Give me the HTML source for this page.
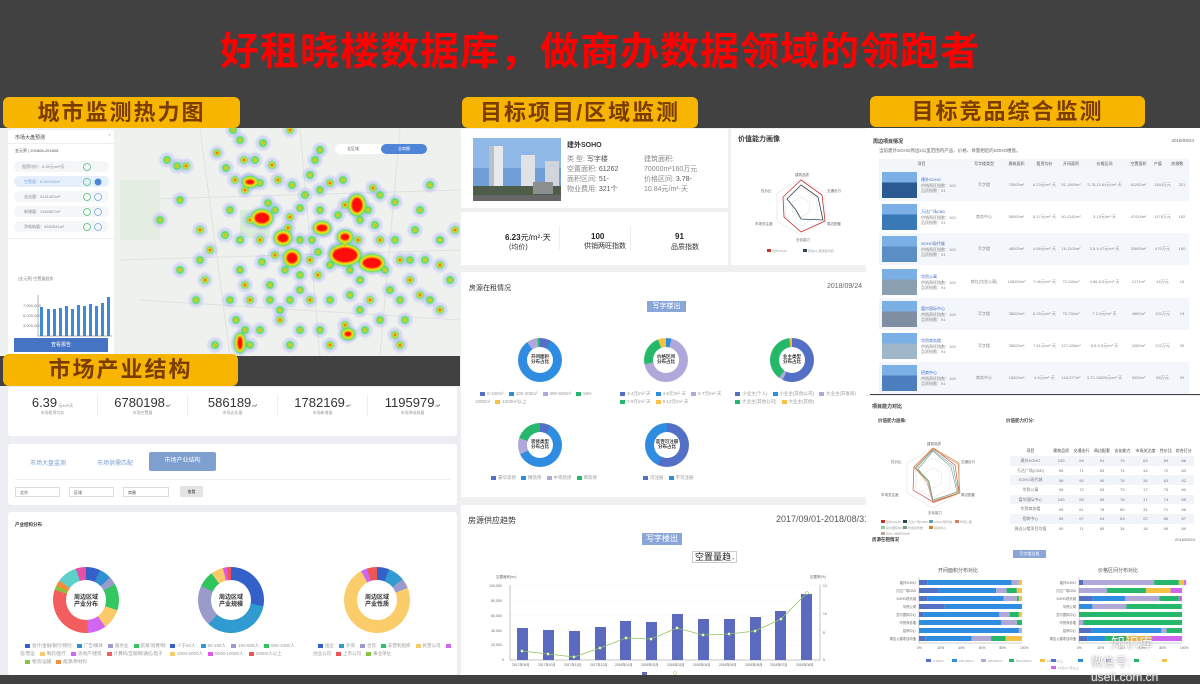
<!DOCTYPE html>
<html><head><meta charset="utf-8">
<style>
*{margin:0;padding:0;box-sizing:border-box}
body{width:1200px;height:675px;overflow:hidden;background:#414141;font-family:"Liberation Sans","Noto Sans CJK SC",sans-serif;position:relative;color:#333}
.a{position:absolute}
.pill{position:absolute;background:#f7b500;border-radius:6px;color:#7a3c00;font-weight:bold;font-size:22px;text-align:center;line-height:31px;letter-spacing:2px}
.card{position:absolute;background:#fff}
.t{position:absolute;font-size:5px;color:#888;white-space:nowrap}
.dn{position:absolute;border-radius:50%}
.dn::after{content:"";position:absolute;left:50%;top:50%;width:60%;height:60%;margin:-30% 0 0 -30%;background:#fff;border-radius:50%}
.dl{position:absolute;font-size:6px;font-weight:bold;color:#333;text-align:center;line-height:7px;z-index:2;white-space:nowrap}
.lg{position:absolute;font-size:4.5px;color:#999;white-space:nowrap;line-height:8px}
.lg i{display:inline-block;width:5px;height:4px;margin:0 2px 0 5px;vertical-align:middle}
table{border-collapse:collapse}
</style></head><body>

<div class="a" style="left:0;top:21px;width:1200px;text-align:center;font-size:39px;color:#f00;font-weight:bold;letter-spacing:1px">好租晓楼数据库，做商办数据领域的领跑者</div>

<!-- LEFT TOP MAP -->
<div class="a" style="left:0;top:128px;width:460px;height:228px;background:#eef1ee;overflow:hidden">
<svg class="a" style="left:0;top:0" width="460" height="228" viewBox="0 128 460 228">
<defs><filter id="b"><feGaussianBlur stdDeviation="0.9"/></filter></defs>
<g stroke="#dfe3df" stroke-width="1" fill="none"><path d="M120 200 L460 190 M140 300 L460 320 M200 128 L230 356 M400 128 L380 356 M120 260 L460 250 M300 128 L320 356"/></g>
<rect x="240" y="210" width="30" height="28" fill="#d8ecd8"/><rect x="120" y="180" width="40" height="60" fill="#e3eee3"/>
<g id="heat" filter="url(#b)"></g>
</svg>
<div class="a" style="left:335px;top:16px;width:92px;height:10px;background:#fff;border-radius:5px;font-size:4px;color:#666;line-height:10px"><span style="margin-left:12px">全区域</span><span style="position:absolute;right:0;width:46px;height:10px;background:#4f85d8;color:#fff;border-radius:5px;text-align:center">全商圈</span></div>
</div>
<div class="a" style="left:8px;top:130px;width:107px;height:226px;background:#fff;border-right:1px solid #eee">
<div class="t" style="left:7px;top:4px;color:#444">市场大盘预测</div>
<div class="t" style="left:100px;top:3px;color:#bbb">×</div>
<div class="a" style="left:0;top:13px;width:107px;border-top:1px solid #eee"></div>
<div class="t" style="left:7px;top:18px;font-size:4px;color:#555">金元界 | 201808-201808</div>
<div class="a" style="left:6px;top:31px;width:95px;height:11px;border-radius:6px;background:#f5f6f8"><span class="t" style="left:8px;top:3px;font-size:4px">租赁均价：6.39元/m²/天</span></div>
<div class="a" style="left:6px;top:46px;width:95px;height:11px;border-radius:6px;background:#e6f0fc"><span class="t" style="left:10px;top:3px;font-size:4px;color:#7aa8e0">空置量：6780198m²</span></div>
<div class="a" style="left:6px;top:61px;width:95px;height:11px;border-radius:6px;background:#f5f6f8"><span class="t" style="left:10px;top:3px;font-size:4px">去化量：9141420m²</span></div>
<div class="a" style="left:6px;top:76px;width:95px;height:11px;border-radius:6px;background:#f5f6f8"><span class="t" style="left:10px;top:3px;font-size:4px">新增量：1340507m²</span></div>
<div class="a" style="left:6px;top:91px;width:95px;height:11px;border-radius:6px;background:#f5f6f8"><span class="t" style="left:10px;top:3px;font-size:4px">净吸纳量：4352541m²</span></div>
<svg class="a" style="left:75px;top:32px" width="30" height="72"><g fill="none" stroke="#52c07a" stroke-width=".8"><circle cx="4" cy="5" r="3.5"/><circle cx="4" cy="20" r="3.5"/><circle cx="4" cy="35" r="3.5"/><circle cx="4" cy="50" r="3.5"/><circle cx="4" cy="65" r="3.5"/></g><circle cx="15" cy="20" r="3.5" fill="#4f85d8"/><g fill="none" stroke="#7aa8e0" stroke-width=".8"><circle cx="15" cy="35" r="3.5"/><circle cx="15" cy="50" r="3.5"/><circle cx="15" cy="65" r="3.5"/></g></svg>
<div class="a" style="left:0;top:108px;width:107px;border-top:1px solid #eee"></div>
<div class="t" style="left:10px;top:146px;font-size:4px">[金元界] 空置量趋势</div>
<svg class="a" style="left:10px;top:135px" width="95" height="85">
<g fill="#3d8ad8"><rect x="22" y="42" width="3" height="29"/><rect x="29" y="44" width="3" height="27"/><rect x="35" y="44" width="3" height="27"/><rect x="41" y="43" width="3" height="28"/><rect x="47" y="41" width="3" height="30"/><rect x="53" y="44" width="3" height="27"/><rect x="59" y="40" width="3" height="31"/><rect x="65" y="41" width="3" height="30"/><rect x="71" y="39" width="3" height="32"/><rect x="77" y="41" width="3" height="30"/><rect x="83" y="38" width="3" height="33"/><rect x="89" y="32" width="3" height="39"/></g>
<line x1="20" y1="71" x2="94" y2="71" stroke="#666" stroke-width=".5"/><line x1="20" y1="30" x2="20" y2="71" stroke="#666" stroke-width=".5"/>
<g font-size="4" fill="#777"><text x="5" y="42">7,000,000</text><text x="5" y="52">5,000,000</text><text x="5" y="62">3,000,000</text></g>
</svg>
<div class="a" style="left:6px;top:208px;width:94px;height:14px;background:#4574c4;color:#fff;font-size:5px;text-align:center;line-height:14px">查看报告</div>
</div>

<!-- LEFT BOTTOM -->
<div class="a" style="left:0;top:386px;width:460px;height:289px;background:#eceef1"></div>
<div class="card" style="left:8px;top:387px;width:449px;height:49px;border-radius:3px">
<div class="a" style="left:0;top:8px;width:449px;display:flex;font-size:13px;color:#333">
<div style="flex:1;text-align:center">6.39<small style="font-size:4px;color:#888"> 元/m²/天</small><div style="font-size:4px;color:#999">市场租赁均价</div></div>
<div style="flex:1;text-align:center;border-left:1px solid #eee">6780198<small style="font-size:4px"> m²</small><div style="font-size:4px;color:#999">市场空置量</div></div>
<div style="flex:1;text-align:center;border-left:1px solid #eee">586189<small style="font-size:4px"> m²</small><div style="font-size:4px;color:#999">市场去化量</div></div>
<div style="flex:1;text-align:center;border-left:1px solid #eee">1782169<small style="font-size:4px"> m²</small><div style="font-size:4px;color:#999">市场新增量</div></div>
<div style="flex:1;text-align:center;border-left:1px solid #eee">1195979<small style="font-size:4px"> m²</small><div style="font-size:4px;color:#999">市场净吸纳量</div></div>
</div></div>
<div class="card" style="left:8px;top:444px;width:449px;height:61px;border-radius:3px">
<div class="t" style="left:22px;top:14px;font-size:6px;color:#7aa0cf">市场大盘监测</div>
<div class="t" style="left:89px;top:14px;font-size:6px;color:#7aa0cf">市场供需匹配</div>
<div class="a" style="left:141px;top:8px;width:67px;height:19px;background:#7f9fd0;border-radius:2px;color:#fff;font-size:6px;text-align:center;line-height:19px">市场产业结构</div>
<div class="a" style="left:7px;top:35px;width:435px;border-top:1px solid #eee"></div>
<div class="a" style="left:7px;top:43px;width:45px;height:10px;border:1px solid #ddd;font-size:4px;padding:2px 4px;color:#555">北京</div>
<div class="a" style="left:61px;top:43px;width:45px;height:10px;border:1px solid #ddd;font-size:4px;padding:2px 4px;color:#555">区域</div>
<div class="a" style="left:115px;top:43px;width:46px;height:10px;border:1px solid #ddd;font-size:4px;padding:2px 4px;color:#555">商圈</div>
<div class="a" style="left:172px;top:42px;width:23px;height:11px;background:#e4e4e4;font-size:4px;text-align:center;line-height:11px">查看</div>
</div>
<div class="card" style="left:8px;top:512px;width:449px;height:163px;border-radius:3px">
<div class="t" style="left:7px;top:10px;font-size:4.5px;color:#333;font-weight:bold">产业结构分布</div>
<div class="dn" style="left:45px;top:55px;width:66px;height:66px;background:conic-gradient(#3461c9 0 7%,#2f8fd0 7% 13%,#9b9bcc 13% 17%,#34c661 17% 30%,#fbc96a 30% 40%,#d266f0 40% 49%,#f35d5d 49% 80%,#87c43e 80% 82%,#f58e3a 82% 85%,#5fcfc9 85% 95%,#e94ea5 95% 100%)"></div>
<div class="dl" style="left:45px;top:83px;width:66px">周边区域<br>产业分布</div>
<div class="dn" style="left:190px;top:55px;width:66px;height:66px;background:conic-gradient(#3461c9 0 28%,#2f9bd0 28% 62%,#9a9acb 62% 82%,#2fc45e 82% 90%,#fbc96a 90% 96%,#e059e0 96% 98%,#f05555 98% 100%)"></div>
<div class="dl" style="left:190px;top:83px;width:66px">周边区域<br>产业规模</div>
<div class="dn" style="left:336px;top:55px;width:66px;height:66px;background:conic-gradient(#3461c9 0 6%,#2f9bd0 6% 14%,#9a9acb 14% 19%,#fbcd6a 19% 92%,#d066f0 92% 95%,#f05555 95% 100%)"></div>
<div class="dl" style="left:336px;top:83px;width:66px">周边区域<br>产业性质</div>
<div class="lg" style="left:12px;top:130px;width:150px;white-space:normal"><i style="background:#3461c9"></i>会计/金融/银行/保险<i style="background:#2f8fd0"></i>广告/媒体<i style="background:#9b9bcc"></i>服务业<i style="background:#34c661"></i>贸易/消费/制造/营运<i style="background:#fbc96a"></i>制药/医疗<i style="background:#d266f0"></i>房地产/建筑<i style="background:#f35d5d"></i>计算机/互联网/通信/电子<i style="background:#87c43e"></i>物流/运输<i style="background:#f58e3a"></i>能源/原材料</div>
<div class="lg" style="left:157px;top:130px;width:140px;white-space:normal"><i style="background:#3461c9"></i>少于50人<i style="background:#2f9bd0"></i>50-150人<i style="background:#9a9acb"></i>150-500人<i style="background:#2fc45e"></i>500-1000人<i style="background:#fbc96a"></i>1000-5000人<i style="background:#e059e0"></i>5000-10000人<i style="background:#f05555"></i>10000人以上</div>
<div class="lg" style="left:305px;top:130px;width:140px;white-space:normal"><i style="background:#3461c9"></i>国企<i style="background:#2f9bd0"></i>外资<i style="background:#9a9acb"></i>合资<i style="background:#2fc45e"></i>非营利组织<i style="background:#fbc96a"></i>民营公司<i style="background:#d066f0"></i>创业公司<i style="background:#f05555"></i>上市公司<i style="background:#87c43e"></i>事业单位</div>
</div>

<!-- MIDDLE -->
<div class="a" style="left:460px;top:128px;width:410px;height:547px;background:#f0f0f0"></div>
<div class="card" style="left:461px;top:129px;width:267px;height:79px">
<svg class="a" style="left:12px;top:9px" width="88" height="63"><rect width="88" height="63" fill="#6f9fd6"/><rect y="0" width="88" height="30" fill="#8fb8e6"/><rect x="16" y="8" width="14" height="45" fill="#e6e9ee"/><rect x="16" y="8" width="5" height="45" fill="#b9c0ca"/><rect x="48" y="17" width="14" height="36" fill="#dfe3e8"/><rect x="72" y="23" width="14" height="30" fill="#d0d5dc"/><rect x="0" y="48" width="88" height="15" fill="#4d5d4a"/><rect x="60" y="44" width="20" height="12" fill="#8b8f90"/><rect x="0" y="57" width="88" height="6" fill="#666"/></svg>
<div class="a" style="left:106px;top:11px;font-size:7px;font-weight:bold;color:#333">建外SOHO</div>
<div class="a" style="left:106px;top:26px;font-size:7px;color:#888;line-height:10px;width:160px">类 型: <span style="color:#555">写字楼</span><br>空置面积: <span style="color:#555">61262</span><br>面积区间: <span style="color:#555">51-</span><br>物业费用: <span style="color:#555">321个</span></div>
<div class="a" style="left:183px;top:26px;font-size:7px;color:#888;line-height:10px;width:90px">建筑面积:<br>70000m²160万元<br>价格区间: <span style="color:#555">3.78-</span><br>10.84元/m²·天</div>
</div>
<div class="card" style="left:461px;top:212px;width:267px;height:53px">
<div class="a" style="left:44px;top:20px;font-size:8px;font-weight:bold;color:#222">6.23<span style="font-weight:normal">元/m²·天</span></div>
<div class="a" style="left:48px;top:30px;font-size:7px;color:#333">(均价)</div>
<div class="a" style="left:98px;top:14px;height:24px;border-left:1px solid #eee"></div>
<div class="a" style="left:130px;top:20px;font-size:8px;font-weight:bold;color:#222">100</div>
<div class="a" style="left:123px;top:30px;font-size:7px;color:#333;width:42px;text-align:center;line-height:10px">供销两旺指数</div>
<div class="a" style="left:169px;top:14px;height:24px;border-left:1px solid #eee"></div>
<div class="a" style="left:214px;top:20px;font-size:8px;font-weight:bold;color:#222">91</div>
<div class="a" style="left:210px;top:30px;font-size:7px;color:#333">品质指数</div>
</div>
<div class="card" style="left:731px;top:129px;width:135px;height:136px">
<div class="a" style="left:7px;top:5px;font-size:7px;font-weight:bold;color:#333">价值能力画像</div>
<svg class="a" style="left:20px;top:28px" width="100" height="100" viewBox="-50 -50 100 100">
<g fill="none" stroke="#ddd" stroke-width=".5"><polygon points="0,-28 24,-14 24,14 0,28 -24,14 -24,-14"/><polygon points="0,-19 16,-9.5 16,9.5 0,19 -16,9.5 -16,-9.5"/><polygon points="0,-10 8.7,-5 8.7,5 0,10 -8.7,5 -8.7,-5"/></g>
<polygon points="0,-27 21,-12 24,14 0,25 -17,10 -18,-10" fill="none" stroke="#c23531" stroke-width=".8"/>
<polygon points="0,-22 17,-10 22,13 0,12 -5,3 -14,-8" fill="none" stroke="#2f4554" stroke-width=".8"/>
<g font-size="3.5" fill="#666"><text x="-6" y="-31">建筑品质</text><text x="26" y="-15">交通出行</text><text x="26" y="18">周边配套</text><text x="-5" y="34">去化能力</text><text x="-46" y="18">市场关注度</text><text x="-40" y="-15">性价比</text></g>
<rect x="-34" y="42" width="4" height="3" fill="#c23531"/><text x="-29" y="45" font-size="3" fill="#999">建外SOHO</text><rect x="2" y="42" width="4" height="3" fill="#2f4554"/><text x="7" y="45" font-size="3" fill="#999">周边2公里项目均值</text>
</svg>
</div>

<div class="card" style="left:461px;top:272px;width:405px;height:225px">
<div class="a" style="left:8px;top:11px;font-size:7px;color:#333">房源在租情况</div>
<div class="a" style="right:4px;top:11px;font-size:7px;color:#666">2018/09/24</div>
<div class="a" style="left:186px;top:29px;width:39px;height:11px;background:#8aa6d8;color:#fff;font-size:7px;text-align:center;line-height:11px">写字楼出</div>
</div>
<div class="dn" style="left:518px;top:338px;width:44px;height:44px;background:conic-gradient(#5470c6 0 8%,#2e8de0 8% 90%,#b0a8d9 90% 98%,#26b86a 98% 100%)"></div>
<div class="dl" style="left:518px;top:354px;width:44px;font-size:4.5px;line-height:5px">开间面积<br>分布占比</div>
<div class="dn" style="left:644px;top:338px;width:44px;height:44px;background:conic-gradient(#2e8de0 0 4%,#b0a8d9 4% 72%,#26b86a 72% 94%,#f6c244 94% 100%)"></div>
<div class="dl" style="left:644px;top:354px;width:44px;font-size:4.5px;line-height:5px">价格区间<br>分布占比</div>
<div class="dn" style="left:770px;top:338px;width:44px;height:44px;background:conic-gradient(#5470c6 0 57%,#b0a8d9 57% 60%,#26b86a 60% 98%,#f6c244 98% 100%)"></div>
<div class="dl" style="left:770px;top:354px;width:44px;font-size:4.5px;line-height:5px">业主类型<br>分布占比</div>
<div class="lg" style="left:475px;top:390px;width:130px;white-space:normal"><i style="background:#5470c6"></i>0-100m²<i style="background:#2e8de0"></i>100-300m²<i style="background:#b0a8d9"></i>300-500m²<i style="background:#26b86a"></i>500-1000m²<i style="background:#f6c244"></i>1000m²以上</div>
<div class="lg" style="left:615px;top:390px;width:110px;white-space:normal"><i style="background:#5470c6"></i>3-4元/m²·天<i style="background:#2e8de0"></i>4-5元/m²·天<i style="background:#b0a8d9"></i>5-7元/m²·天<i style="background:#26b86a"></i>7-9元/m²·天<i style="background:#f6c244"></i>9-12元/m²·天</div>
<div class="lg" style="left:730px;top:390px;width:135px;white-space:normal"><i style="background:#5470c6"></i>小业主(个人)<i style="background:#2e8de0"></i>小业主(其他公司)<i style="background:#b0a8d9"></i>大业主(开发商)<i style="background:#26b86a"></i>大业主(其他公司)<i style="background:#f6c244"></i>大业主(其他)</div>
<div class="dn" style="left:518px;top:423px;width:44px;height:44px;background:conic-gradient(#5470c6 0 8%,#2e8de0 8% 68%,#b0a8d9 68% 80%,#26b86a 80% 100%)"></div>
<div class="dl" style="left:518px;top:439px;width:44px;font-size:4.5px;line-height:5px">装修类型<br>分布占比</div>
<div class="dn" style="left:645px;top:423px;width:44px;height:44px;background:conic-gradient(#5470c6 0 57%,#2e8de0 57% 100%)"></div>
<div class="dl" style="left:645px;top:439px;width:44px;font-size:4.5px;line-height:5px">是否可注册<br>分布占比</div>
<div class="lg" style="left:486px;top:474px"><i style="background:#5470c6"></i>豪华装修<i style="background:#2e8de0"></i>精装修<i style="background:#b0a8d9"></i>中等装修<i style="background:#26b86a"></i>简装修</div>
<div class="lg" style="left:638px;top:474px"><i style="background:#5470c6"></i>可注册<i style="background:#2e8de0"></i>不可注册</div>

<div class="card" style="left:461px;top:505px;width:405px;height:170px">
<div class="a" style="left:7px;top:10px;font-size:8px;color:#333">房源供应趋势</div>
<div class="a" style="left:315px;top:9px;font-size:9px;color:#555;white-space:nowrap">2017/09/01-2018/08/31</div>
<div class="a" style="left:181px;top:28px;width:40px;height:12px;background:#8aa6d8;color:#fff;font-size:8px;text-align:center;line-height:12px">写字楼出</div>
<div class="a" style="left:231px;top:46px;width:45px;height:12px;border:1px solid #ccc;font-size:9px;color:#222;line-height:11px;padding-left:2px">空置量趋<span style="font-size:4px;color:#999"> ▾</span></div>
</div>
<svg class="a" style="left:460px;top:570px" width="410" height="105">
<g font-size="3.5" fill="#666"><text x="36" y="8">空置面积(m²)</text><text x="350" y="8">空置率(%)</text>
<text x="29" y="17">100,000</text><text x="31" y="32">80,000</text><text x="31" y="47">60,000</text><text x="31" y="62">40,000</text><text x="31" y="76">20,000</text><text x="42" y="91">0</text></g>
<g stroke="#e8e8e8" stroke-width=".5" stroke-dasharray="2 2"><line x1="50" y1="15" x2="360" y2="15"/><line x1="50" y1="30" x2="360" y2="30"/><line x1="50" y1="45" x2="360" y2="45"/><line x1="50" y1="60" x2="360" y2="60"/><line x1="50" y1="75" x2="360" y2="75"/></g>
<line x1="50" y1="15" x2="50" y2="90" stroke="#888" stroke-width=".5"/><line x1="360" y1="15" x2="360" y2="90" stroke="#888" stroke-width=".5"/><line x1="50" y1="90" x2="360" y2="90" stroke="#888" stroke-width=".5"/>
<g fill="#5b6abf"><rect x="57" y="58" width="11" height="32"/><rect x="83" y="60" width="11" height="30"/><rect x="109" y="61" width="11" height="29"/><rect x="135" y="57" width="11" height="33"/><rect x="160" y="51" width="11" height="39"/><rect x="186" y="52" width="11" height="38"/><rect x="212" y="44" width="11" height="46"/><rect x="238" y="49" width="11" height="41"/><rect x="264" y="49" width="11" height="41"/><rect x="290" y="47" width="11" height="43"/><rect x="315" y="41" width="11" height="49"/><rect x="341" y="24" width="11" height="66"/></g>
<polyline points="62,81 88,84 114,87 140,78 166,68 191,69 217,58 243,65 269,64 295,61 321,49 347,23" fill="none" stroke="#91c35e" stroke-width=".8"/>
<g fill="#fff" stroke="#91c35e" stroke-width=".6"><circle cx="62" cy="81" r="1.3"/><circle cx="88" cy="84" r="1.3"/><circle cx="114" cy="87" r="1.3"/><circle cx="140" cy="78" r="1.3"/><circle cx="166" cy="68" r="1.3"/><circle cx="191" cy="69" r="1.3"/><circle cx="217" cy="58" r="1.3"/><circle cx="243" cy="65" r="1.3"/><circle cx="269" cy="64" r="1.3"/><circle cx="295" cy="61" r="1.3"/><circle cx="321" cy="49" r="1.3"/><circle cx="347" cy="23" r="1.5"/></g>
<g font-size="3.3" fill="#666"><text x="52" y="96">2017年09月</text><text x="78" y="96">2017年10月</text><text x="104" y="96">2017年11月</text><text x="130" y="96">2017年12月</text><text x="155" y="96">2018年01月</text><text x="181" y="96">2018年02月</text><text x="207" y="96">2018年03月</text><text x="233" y="96">2018年04月</text><text x="259" y="96">2018年05月</text><text x="285" y="96">2018年06月</text><text x="310" y="96">2018年07月</text><text x="336" y="96">2018年08月</text>
<text x="363" y="17">13</text><text x="363" y="45">10</text><text x="363" y="64">8</text><text x="363" y="91">5</text></g>
<rect x="182" y="102" width="5" height="3" fill="#5b6abf"/><circle cx="215" cy="103" r="1.5" fill="none" stroke="#91c35e" stroke-width=".5"/>
</svg>

<!-- RIGHT -->
<div class="card" style="left:866px;top:128px;width:334px;height:266px">
<div class="a" style="left:7px;top:10px;font-size:5px;font-weight:bold;color:#333">周边项目情况</div>
<div class="a" style="right:6px;top:10px;font-size:4.5px;color:#666">2018/09/24</div>
<div class="a" style="left:13px;top:20px;font-size:4.5px;color:#666">当前建外SOHO周边2公里范围内产品、价格、体量相近的SOHO楼盘。</div>
<table class="a" style="left:13px;top:31px;width:310px;font-size:4px;color:#777;text-align:center">
<tr style="height:10px;background:#f3f5f8;color:#555"><td style="width:85px">项目</td><td style="width:40px">写字楼类型</td><td style="width:25px">建筑面积</td><td style="width:31px">租赁均价</td><td style="width:22px">开间面积</td><td style="width:45px">价格区间</td><td style="width:23px">空置面积</td><td>产值</td><td>房源数</td></tr>
</table>
<div class="a" style="left:13px;top:41px;width:310px" id="rows"></div>
</div>

<div class="card" style="left:866px;top:395px;width:334px;height:140px;border-top:1px solid #eee">
<div class="a" style="left:6px;top:7px;font-size:5px;font-weight:bold;color:#333">项目能力对比</div>
<div class="a" style="left:12px;top:22px;font-size:4.5px;font-weight:bold;color:#444">价值能力画像:</div>
<div class="a" style="left:140px;top:22px;font-size:4.5px;font-weight:bold;color:#444">价值能力打分:</div>
<svg class="a" style="left:12px;top:32px" width="110" height="108" viewBox="-55 -50 110 108">
<g fill="none" stroke="#ddd" stroke-width=".5"><polygon points="0,-30 26,-15 26,15 0,30 -26,15 -26,-15"/><polygon points="0,-20 17,-10 17,10 0,20 -17,10 -17,-10"/><polygon points="0,-10 8.7,-5 8.7,5 0,10 -8.7,5 -8.7,-5"/></g>
<polygon points="0,-30 22,-13 26,15 0,24 -20,12 -19,-11" fill="none" stroke="#c23531" stroke-width=".6"/>
<polygon points="0,-28 20,-12 25,14 0,22 -4,3 -17,-10" fill="none" stroke="#61a0a8" stroke-width=".6"/>
<polygon points="0,-29 25,-14 27,15 0,25 -6,4 -18,-10" fill="none" stroke="#d48265" stroke-width=".6"/>
<polygon points="0,-30 26,-15 26,15 0,23 -5,3 -19,-11" fill="none" stroke="#ca8622" stroke-width=".6"/>
<polygon points="0,-27 18,-11 24,14 0,22 -5,3 -15,-9" fill="none" stroke="#749f83" stroke-width=".6"/>
<g font-size="3.5" fill="#666"><text x="-6" y="-33">建筑品质</text><text x="28" y="-15">交通出行</text><text x="28" y="18">周边配套</text><text x="-5" y="36">去化能力</text><text x="-52" y="18">市场关注度</text><text x="-42" y="-15">性价比</text></g>
<g font-size="3" fill="#999"><rect x="-52" y="42" width="4" height="3" fill="#c23531"/><text x="-47" y="45">建外SOHO</text><rect x="-30" y="42" width="4" height="3" fill="#2f4554"/><text x="-25" y="45">万达广场(CBD)</text><rect x="-4" y="42" width="4" height="3" fill="#61a0a8"/><text x="1" y="45">SOHO现代城</text><rect x="22" y="42" width="4" height="3" fill="#d48265"/><text x="27" y="45">华贸公寓</text>
<rect x="-52" y="48" width="4" height="3" fill="#91c7ae"/><text x="-47" y="51">富尔国际中心</text><rect x="-30" y="48" width="4" height="3" fill="#749f83"/><text x="-25" y="51">华贸商务楼</text><rect x="-4" y="48" width="4" height="3" fill="#ca8622"/><text x="1" y="51">招商中心</text><rect x="-52" y="54" width="4" height="3" fill="#bda29a"/><text x="-47" y="57">周边公楼项目均值</text></g>
</svg>
<table class="a" style="left:144px;top:50px;width:184px;font-size:4px;color:#777;text-align:center">
<tr style="height:10px;color:#444"><td>项目</td><td>建筑品质</td><td>交通出行</td><td>周边配套</td><td>去化能力</td><td>市场关注度</td><td>性价比</td><td>综合打分</td></tr>
<tr style="height:9.7px;background:#f1f4f9"><td>建外SOHO</td><td>100</td><td>94</td><td>91</td><td>79</td><td>63</td><td>69</td><td>86</td></tr>
<tr style="height:9.7px"><td>万达广场(CBD)</td><td>96</td><td>71</td><td>83</td><td>74</td><td>44</td><td>72</td><td>83</td></tr>
<tr style="height:9.7px;background:#f1f4f9"><td>SOHO现代城</td><td>98</td><td>90</td><td>90</td><td>76</td><td>34</td><td>63</td><td>82</td></tr>
<tr style="height:9.7px"><td>华贸公寓</td><td>96</td><td>72</td><td>83</td><td>73</td><td>17</td><td>75</td><td>80</td></tr>
<tr style="height:9.7px;background:#f1f4f9"><td>富尔国际中心</td><td>100</td><td>95</td><td>95</td><td>76</td><td>17</td><td>74</td><td>85</td></tr>
<tr style="height:9.7px"><td>华贸商务楼</td><td>95</td><td>61</td><td>78</td><td>80</td><td>31</td><td>71</td><td>86</td></tr>
<tr style="height:9.7px;background:#f1f4f9"><td>招商中心</td><td>99</td><td>97</td><td>94</td><td>83</td><td>22</td><td>85</td><td>87</td></tr>
<tr style="height:9.7px"><td>周边公楼项目均值</td><td>90</td><td>71</td><td>85</td><td>34</td><td>18</td><td>59</td><td>89</td></tr>
</table>
</div>
<div class="a" style="left:866px;top:535px;width:334px;height:140px;background:#fff">
<div class="a" style="left:6px;top:2px;font-size:4.5px;font-weight:bold;color:#333">房源在租情况</div>
<div class="a" style="right:5px;top:2px;font-size:4px;color:#666">2018/09/24</div>
<div class="a" style="left:147px;top:15px;width:33px;height:8px;background:#8aa6d8;color:#fff;font-size:4px;text-align:center;line-height:8px">写字楼出租</div>
<div class="a" style="left:72px;top:32px;font-size:5px;color:#555">开间面积分布对比</div>
<div class="a" style="left:232px;top:32px;font-size:5px;color:#555">价格区间分布对比</div>
<svg class="a" style="left:0;top:40px" width="334" height="100" id="bars"></svg>
<div class="a" style="left:245px;top:98px;font-size:14px;color:rgba(255,255,255,.85);text-shadow:0 0 2px #888">知识库</div>
<div class="a" style="left:225px;top:118px;font-size:12px;color:rgba(255,255,255,.85);text-shadow:0 0 2px #888">微信号: useit.com.cn</div>
</div>

<div class="pill" style="left:3px;top:97px;width:237px">城市监测热力图</div>
<div class="pill" style="left:462px;top:97px;width:236px">目标项目/区域监测</div>
<div class="pill" style="left:870px;top:96px;width:275px">目标竞品综合监测</div>
<div class="pill" style="left:3px;top:354px;width:235px;height:32px">市场产业结构</div>

<script>
// heatmap
var pts=[[217,153],[167,160],[177,166],[186,166],[233,130],[240,140],[244,160],[255,160],[263,143],[290,130],[315,160],[320,150],[235,180],[248,180],[260,183],[245,190],[268,203],[292,185],[278,180],[310,175],[320,190],[330,183],[343,180],[355,200],[373,188],[380,195],[395,202],[250,220],[262,222],[275,210],[290,217],[300,240],[312,240],[325,230],[335,250],[345,245],[358,240],[360,220],[368,210],[345,205],[320,210],[300,208],[275,255],[285,270],[300,275],[318,275],[330,265],[350,270],[370,260],[385,270],[395,240],[400,260],[410,260],[425,260],[440,265],[440,240],[415,230],[210,250],[200,260],[180,270],[205,280],[240,270],[230,300],[250,300],[270,300],[290,300],[310,300],[330,300],[350,295],[370,300],[390,290],[400,300],[420,295],[245,330],[260,330],[280,320],[300,330],[320,330],[345,325],[365,330],[380,320],[395,335],[405,320],[430,300],[440,310],[240,240],[225,235],[260,240],[180,200],[160,220],[200,230],[230,210],[270,285],[310,260],[300,290],[360,280],[380,240],[420,210],[450,280],[330,345],[290,345],[250,345],[400,345],[215,345],[226,168],[272,165],[305,195],[338,215],[288,228],[318,252],[262,262],[245,285],[280,310],[360,310],[410,280],[196,300],[236,320],[455,230],[430,185],[375,225]];
var big=[[262,218,8,6],[283,238,6,5],[292,258,6,6],[345,255,13,8],[372,263,10,6],[357,205,6,8],[322,228,6,4],[345,237,5,4],[250,182,5,3],[240,343,3,7],[348,334,4,3]];
var s='';
pts.forEach(function(p){s+='<circle cx="'+p[0]+'" cy="'+p[1]+'" r="7.5" fill="#a0a0ff" opacity=".3"/>';});
big.forEach(function(p){s+='<ellipse cx="'+p[0]+'" cy="'+p[1]+'" rx="'+(p[2]+6)+'" ry="'+(p[3]+6)+'" fill="#a0a0ff" opacity=".35"/>';});
big.forEach(function(p){s+='<ellipse cx="'+p[0]+'" cy="'+p[1]+'" rx="'+(p[2]+3.5)+'" ry="'+(p[3]+3.5)+'" fill="#44dd55"/>';});
pts.forEach(function(p){s+='<circle cx="'+p[0]+'" cy="'+p[1]+'" r="4" fill="#44dd55"/>';});
big.forEach(function(p){s+='<ellipse cx="'+p[0]+'" cy="'+p[1]+'" rx="'+(p[2]+1.8)+'" ry="'+(p[3]+1.8)+'" fill="#f0f000"/>';});
pts.forEach(function(p,i){s+='<circle cx="'+p[0]+'" cy="'+p[1]+'" r="'+(i%3?1.8:2.6)+'" fill="#f0f000"/>';});
big.forEach(function(p){s+='<ellipse cx="'+p[0]+'" cy="'+p[1]+'" rx="'+p[2]+'" ry="'+p[3]+'" fill="#ff1010"/>';});
pts.forEach(function(p,i){s+='<circle cx="'+p[0]+'" cy="'+p[1]+'" r="'+(i%3?0.9:1.5)+'" fill="#ff1010"/>';});
document.getElementById('heat').innerHTML=s;
// rows
var rows=[['建外SOHO','写字楼','70000m²','6.23元/m²·天','51-1890m²','3.78-10.84元/m²·天','61262m²','1160万元','321'],['万达广场CBD','商务中心','58000m²','8.17元/m²·天','40-2181m²','3-15元/m²·天','47418m²','1178万元','182'],['SOHO现代城','写字楼','48000m²','4.68元/m²·天','16-1100m²','3.5-9.47元/m²·天','33690m²','470万元','160'],['华贸公寓','商住(包含公寓)','108000m²','7.06元/m²·天','73-346m²','4.66-6.5元/m²·天','2171m²','46万元','16'],['富尔国际中心','写字楼','38000m²','8.25元/m²·天','75-750m²','7.2-9元/m²·天','4860m²','120万元','19'],['华贸商务楼','写字楼','38000m²','7.61元/m²·天','127-636m²','6.5-9.5元/m²·天','4260m²','102万元','30'],['招商中心','商务中心','18000m²','4.5元/m²·天','118-377m²','3.72-16800元/m²·天','5025m²','68万元','29']];
var cols=['#2b5a93','#3a79b8','#5b8ec4','#8aa0b0','#7f8ea0','#9fb7c8','#4d7fbf'];
var h='';rows.forEach(function(r,i){var y=i*32.2;h+='<div style="position:absolute;left:0;top:'+y+'px;width:310px;height:32px;background:'+(i%2?'#fff':'#f3f6fa')+';font-size:4px;color:#888">'+
'<div style="position:absolute;left:3px;top:3px;width:35px;height:26px;background:linear-gradient(#7ab0e6 0 40%,'+cols[i]+' 40%)"></div>'+
'<div style="position:absolute;left:42px;top:8px;color:#4169c6">'+r[0]+'</div><div style="position:absolute;left:42px;top:14px;line-height:5px">供销两旺指数：100<br>品质指数：91</div>';
for(var k=1;k<9;k++){h+='<div style="position:absolute;left:'+([0,85,125,150,181,203,248,271,296][k])+'px;width:'+([0,40,25,31,22,45,23,25,14][k])+'px;text-align:center;top:13px">'+r[k]+'</div>';}
h+='</div>';});
document.getElementById('rows').innerHTML=h;
// bars
var c1=['#5470c6','#2e8de0','#b0a8d9','#26b86a','#f6c244'],c2=['#5470c6','#2e8de0','#b0a8d9','#26b86a','#f6c244','#d066f0'];
var d1=[[8,82,7,0,3],[19,56,10,10,5],[8,74,13,2,3],[25,74,0,1,0],[4,74,10,9,3],[0,80,15,5,0],[0,97,3,0,0],[6,45,19,14,16]];
var d2=[[4,0,69,24,5,2],[0,0,27,38,24,11],[13,32,33,19,0,3],[0,13,33,53,0,1],[0,0,0,100,0,0],[0,0,4,96,0,0],[12,68,5,15,0,0],[8,18,0,20,24,30]];
var names=['建外SOHO','万达广场CBD','SOHO现代城','华贸公寓','富尔国际中心','华贸商务楼','招商中心','周边公楼项目均值'];
var b='';
function chart(x0,w,d,c){d.forEach(function(r,i){var x=x0,y=5+i*8;r.forEach(function(v,j){var ww=v/100*w;b+='<rect x="'+x+'" y="'+y+'" width="'+ww+'" height="5" fill="'+c[j]+'"/>';x+=ww;});b+='<text x="'+(x0-3)+'" y="'+(y+4)+'" font-size="3.3" fill="#666" text-anchor="end">'+names[i]+'</text>';});
b+='<line x1="'+x0+'" y1="2" x2="'+x0+'" y2="68" stroke="#888" stroke-width=".4"/><line x1="'+x0+'" y1="68" x2="'+(x0+w)+'" y2="68" stroke="#888" stroke-width=".4"/>';
for(var k=0;k<=5;k++)b+='<text x="'+(x0+k*w/5-2)+'" y="74" font-size="3.3" fill="#666">'+(k*20)+'%</text>';}
chart(53,103,d1,c1);chart(213,103,d2,c2);
b+='<g font-size="3" fill="#999"><rect x="60" y="84" width="5" height="3" fill="#5470c6"/><text x="67" y="87">0-100m²</text><rect x="86" y="84" width="5" height="3" fill="#2e8de0"/><text x="93" y="87">100-300m²</text><rect x="115" y="84" width="5" height="3" fill="#b0a8d9"/><text x="122" y="87">300-500m²</text><rect x="143" y="84" width="5" height="3" fill="#26b86a"/><text x="150" y="87">500-1000m²</text><rect x="174" y="84" width="5" height="3" fill="#f6c244"/><text x="181" y="87">1000m²以上</text>';
b+='<rect x="185" y="84" width="5" height="3" fill="#5470c6"/><rect x="212" y="84" width="5" height="3" fill="#2e8de0"/><rect x="240" y="84" width="5" height="3" fill="#b0a8d9"/><rect x="268" y="84" width="5" height="3" fill="#26b86a"/><rect x="296" y="84" width="5" height="3" fill="#f6c244"/><rect x="185" y="91" width="5" height="3" fill="#d066f0"/><text x="192" y="94">12元/m²·天以上</text></g>';
document.getElementById('bars').innerHTML=b;
</script>
</body></html>
